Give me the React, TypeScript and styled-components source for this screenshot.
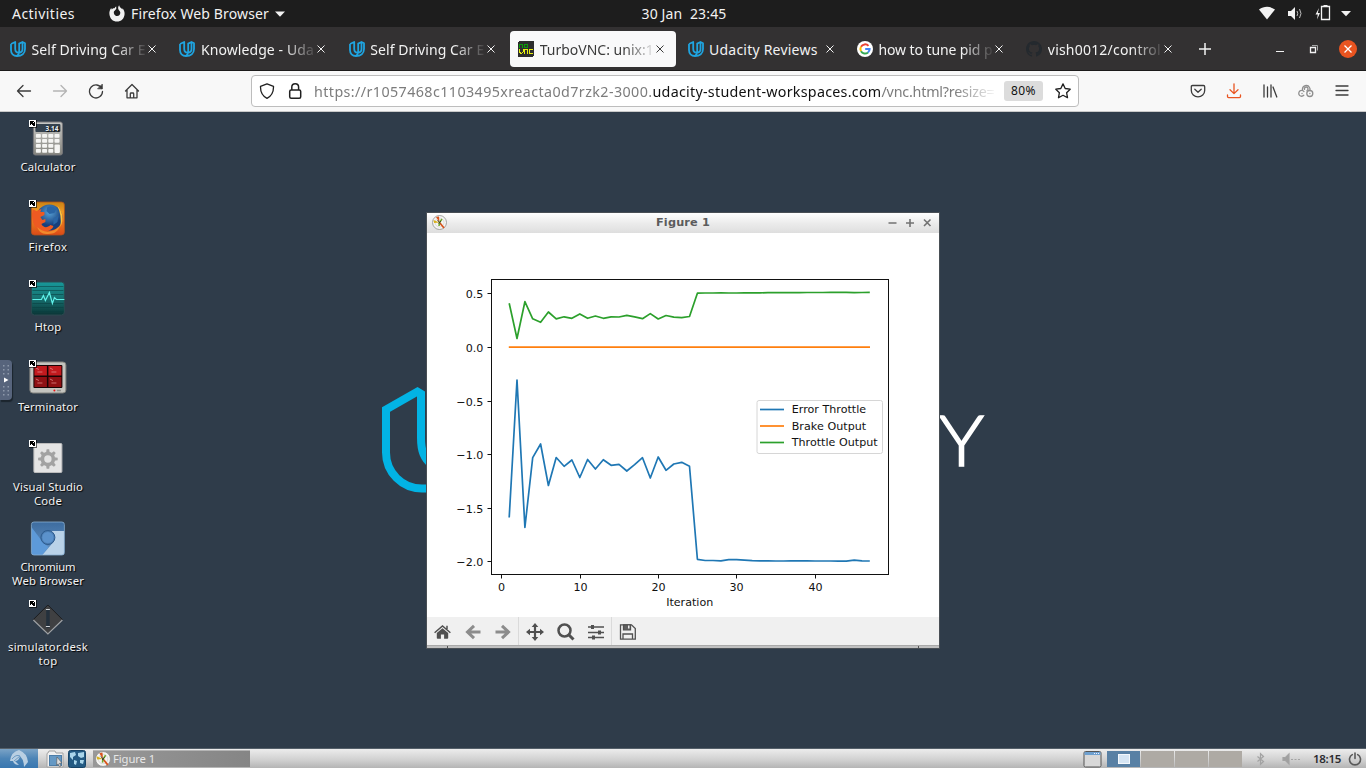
import React, { useLayoutEffect, useRef, useState } from "react";
import styled, { createGlobalStyle } from "styled-components";

const GlobalStyle = createGlobalStyle`
  * { box-sizing: border-box; }
  body { margin: 0; overflow: hidden; font-family: "Noto Sans", "Open Sans", sans-serif; }
  svg { display: block; flex: none; }
`;

/* ---------- text that is tracked to fill a given width ---------- */

const Line = styled.span`
  display: inline-block;
  white-space: pre;
`;

function FitText({ width, children }: { width: number; children: string }) {
  const ref = useRef<HTMLSpanElement>(null);
  const [spacing, setSpacing] = useState(0);
  useLayoutEffect(() => {
    const el = ref.current;
    if (el) setSpacing((width - el.getBoundingClientRect().width) / children.length);
  }, [width, children]);
  return (
    <Line ref={ref} style={{ letterSpacing: spacing }}>
      {children}
    </Line>
  );
}

/* ---------- layout ---------- */

const Screen = styled.div`
  width: 1366px;
  height: 768px;
  display: flex;
  flex-direction: column;
  overflow: hidden;
`;

const TopBar = styled.header`
  height: 27px;
  flex: none;
  background: #1d1d1d;
  color: #f2f2f2;
  font-size: 14px;
  line-height: 26px;
  display: grid;
  grid-template-columns: 1fr auto 1fr;
  align-items: center;
`;

const TopLeft = styled.div`
  display: flex;
  align-items: center;
  padding-left: 12px;
`;

const AppMenu = styled.div`
  display: flex;
  align-items: center;
  margin-left: 34px;
  gap: 6px;
`;

const TopDate = styled.div`
  padding-left: 2px;
`;

const TopRight = styled.div`
  display: flex;
  justify-content: flex-end;
  align-items: center;
  padding-right: 15px;
`;

const TabBar = styled.nav`
  height: 44px;
  flex: none;
  background: #333132;
  border-bottom: 1px solid #1c1b1b;
  padding: 4px 0 3px 2px;
  display: flex;
  align-items: center;
`;

const Tab = styled.div<{ $active?: boolean }>`
  width: 166px;
  height: 36px;
  margin-right: 3.4px;
  flex: none;
  border-radius: 4px;
  padding: 0 12px 0 8px;
  display: flex;
  align-items: center;
  font-size: 14px;
  line-height: 20px;
  color: ${(p) => (p.$active ? "#3b3b3b" : "#f2f2f2")};
  background: ${(p) => (p.$active ? "#f9f9fa" : "transparent")};
`;

const TabTitle = styled.div<{ $fade: boolean }>`
  flex: 1;
  height: 22px;
  padding-top: 2px;
  margin-left: 5.5px;
  ${(p) => p.$fade && "mask-image: linear-gradient(to right, #000 84px, transparent 117px);"}
`;

const TabControls = styled.div`
  display: flex;
  flex: 1;
  align-items: center;
  padding: 0 9px 0 11px;
`;

const WindowButtons = styled.div`
  margin-left: auto;
  display: flex;
  align-items: center;
`;

const NavBar = styled.div`
  height: 41px;
  flex: none;
  background: #f8f8f8;
  border-bottom: 1px solid #c9c9c9;
  display: flex;
  align-items: center;
  color: #3c3c3c;
`;

const NavButtons = styled.div`
  display: flex;
  width: 251px;
  padding-left: 16px;
  gap: 20px;
`;

const UrlBar = styled.div`
  width: 828px;
  height: 32px;
  border: 1px solid #bdbdbd;
  border-radius: 4px;
  background: #fff;
  display: flex;
  align-items: center;
  padding: 0 7px;
`;

const UrlText = styled.div`
  width: 682px;
  margin-left: 11px;
  padding-top: 1px;
  white-space: nowrap;
  font-size: 14.3px;
  line-height: 24px;
  color: #7c7c7c;
  mask-image: linear-gradient(to right, #000 640px, transparent 684px);
`;

const Host = styled.span`
  color: #101010;
`;

const Zoom = styled.div`
  width: 39px;
  height: 20px;
  margin: 0 12px 0 8px;
  border-radius: 3px;
  background: #dcdcdc;
  color: #101010;
  font-size: 12px;
  line-height: 20px;
  text-align: center;
`;

const NavActions = styled.div`
  margin-left: auto;
  display: flex;
  gap: 20px;
  padding-right: 16px;
`;

const Desktop = styled.main`
  position: relative;
  height: 636px;
  flex: none;
  background: #2f3c4a;
  overflow: hidden;
`;

const Wallpaper = styled.svg`
  position: absolute;
  left: 370px;
  top: 260px;
`;

const IconColumn = styled.div`
  width: 96px;
  padding-top: 6px;
  display: flex;
  flex-direction: column;
`;

const Launcher = styled.div`
  height: 80px;
  display: flex;
  flex-direction: column;
  align-items: center;
  color: #f2f2f2;
  font-size: 11.3px;
  line-height: 14px;
  text-shadow: 1px 1px 1px #000;
`;

const LauncherLabel = styled.div`
  margin-top: 2px;
  display: flex;
  flex-direction: column;
  align-items: center;
`;

const SideHandle = styled.div`
  position: absolute;
  left: 0;
  top: 248px;
  width: 12px;
  height: 40px;
  border-radius: 0 4px 4px 0;
  background: #57647c;
  box-shadow: 1px 2px 1px #1b242d;
`;

const FigureWindow = styled.section`
  position: absolute;
  left: 427px;
  top: 101px;
  width: 512px;
  height: 435px;
  display: flex;
  flex-direction: column;
  background: #fff;
  box-shadow: 0 0 0 1px #494f55;
`;

const TitleBar = styled.div`
  height: 20px;
  flex: none;
  background: linear-gradient(#ffffff, #ececec 50%, #dedede);
  display: grid;
  grid-template-columns: 1fr auto 1fr;
  align-items: center;
  padding: 0 5px 1px 5px;
  font: bold 11.3px/19px "DejaVu Sans", sans-serif;
  color: #5c5c5c;
`;

const TitleButtons = styled.div`
  display: flex;
  justify-content: flex-end;
`;

const PlotTools = styled.div`
  height: 29px;
  flex: none;
  background: #f0f0f0;
  display: flex;
  align-items: center;
`;

const ToolGroup = styled.div<{ $width: number }>`
  width: ${(p) => p.$width}px;
  height: 29px;
  border-right: 1px solid #dadada;
  display: flex;
  align-items: center;
  justify-content: space-around;
`;

const ResizeEdge = styled.div`
  height: 3px;
  margin-top: -1px;
  flex: none;
  background: #c0c0c0;
  border-top: 1px solid #a9a9a9;
  display: flex;
  justify-content: space-between;
  padding: 0 20px;
`;

const Notch = styled.span`
  width: 1px;
  height: 2px;
  background: #555;
`;

const Panel = styled.footer`
  height: 20px;
  flex: none;
  border-top: 1px solid #55606a;
  background: linear-gradient(#ececec, #cfcfcf 60%, #b4b4b4);
  display: flex;
  align-items: center;
  font-size: 11.3px;
`;

const StartButton = styled.div`
  width: 38px;
  height: 19px;
  background: linear-gradient(#7ba3c6, #4c84b6 50%, #3977b0);
  display: flex;
  justify-content: center;
`;

const Shortcuts = styled.div`
  display: flex;
  gap: 4px;
  padding: 0 7px 0 8px;
`;

const TaskButton = styled.div`
  width: 157px;
  height: 17px;
  background: linear-gradient(to right, #989898, #858585);
  border-top: 1px solid #b4b4b4;
  color: #e6e6e6;
  display: flex;
  align-items: center;
  padding-left: 2px;
  gap: 2px;
  line-height: 16px;
`;

const Tray = styled.div`
  margin-left: auto;
  display: flex;
  align-items: center;
  padding-right: 4px;
`;

const Pager = styled.div`
  display: grid;
  grid-template-columns: repeat(4, 33px);
  gap: 1px;
  height: 16px;
  margin: 0 13px 0 5px;
`;

const Workspace = styled.div<{ $current?: boolean }>`
  background: ${(p) => (p.$current ? "#5880a4" : "#aeaaa4")};
  display: flex;
  align-items: center;
  justify-content: center;
`;

const MiniWindow = styled.div`
  width: 12px;
  height: 10px;
  background: #d6e5f3;
  border: 1px solid #f4f8fc;
`;

const Clock = styled.div`
  color: #2c2c30;
  font-size: 11.5px;
  font-weight: 600;
  line-height: 16px;
  margin: 0 7px 0 12px;
`;

/* ---------- drawings ---------- */

const UdacityMark = () => (
  <svg width="16" height="16" viewBox="0 0 16 16" fill="none" stroke="#1fa4e0" strokeWidth="1.8" strokeLinejoin="round">
    <path d="M1 3L5.200 1V7.500c0 2.800 1.300 4.200 3.300 4.200M1 3V9c0 3.500 2.300 6 6 6 4.700 0 8-2.500 8-7V2.300L12.500 1 9.200 2.600V10c0 2.500-.8 4-2.500 5M12.500 1V8c0 2.200-1.300 3.600-3.500 3.700" />
  </svg>
);

const NoVncMark = () => (
  <svg width="16" height="16" shapeRendering="crispEdges">
    <rect width="16" height="16" rx="2" fill="#2d2d2d" />
    <path d="M1 3h4v4H4V4H2v3H1zM6 3h4v4H6zM7 4v2h2V4z" fill="#0a9a0a" fillRule="evenodd" />
    <path d="M1 8h1v3h1v1h1v-1h1V8h1v3H5v1H4v1H2v-1H1zM6 8h4v5H9V9H7v4H6zM11 8h4v1h-3v3h3v1h-4z" fill="#e6ee10" />
  </svg>
);

const GoogleMark = () => (
  <svg width="16" height="16" viewBox="0 0 16 16" fill="none" strokeWidth="2">
    <circle cx="8" cy="8" r="8" fill="#fff" />
    <path d="M11.500 4.900A4.600 4.600 0 0 0 4 5.800" stroke="#ea4335" />
    <path d="M4 5.800a4.600 4.600 0 0 0 0 4.400" stroke="#fbbc05" />
    <path d="M4 10.200a4.600 4.600 0 0 0 7 1.200" stroke="#34a853" />
    <path d="M11 11.400A4.600 4.600 0 0 0 12.600 8.100H8.200" stroke="#4285f4" />
  </svg>
);

const GithubMark = () => (
  <svg width="16" height="16" viewBox="0 0 16 16" fill="#24292e">
    <path d="M8 0C3.580 0 0 3.580 0 8c0 3.540 2.290 6.530 5.470 7.590.4.070.55-.17.55-.38v-1.490c-2.230.48-2.690-.94-2.690-.94-.36-.93-.89-1.170-.89-1.170-.73-.5.050-.49.050-.49.81.060 1.230.83 1.230.83.72 1.230 1.880.87 2.340.66.070-.52.28-.87.51-1.070-1.780-.2-3.640-.89-3.640-3.950 0-.87.31-1.590.82-2.150-.08-.2-.36-1.020.08-2.120 0 0 .67-.21 2.200.82a7.600 7.600 0 0 1 4 0c1.530-1.040 2.200-.82 2.200-.82.44 1.100.16 1.920.08 2.120.51.56.82 1.270.82 2.150 0 3.070-1.870 3.750-3.650 3.950.29.25.54.73.54 1.480v2.190c0 .21.150.46.55.38A8 8 0 0 0 8 0z" />
  </svg>
);

const CloseCross = ({ size = 8 }: { size?: number }) => (
  <svg width={size} height={size} viewBox="0 0 8 8" stroke="currentColor" strokeWidth="1">
    <path d="M.5.5l7 7M7.500.5l-7 7" />
  </svg>
);

const FirefoxSymbol = () => (
  <svg width="16" height="17" viewBox="0 0 16 17">
    <path
      fill="#f2f2f2"
      fillRule="evenodd"
      d="M.4 9C.2 6.500 1 4.500 2.200 3l.6 1.400C3.600 3.200 4.500 3 5.600 3.200 6 2.300 6.600 1.900 7.200 1.600L7.300 3.800 5.900 5.500C5.100 6 4.600 7 4.900 8.200 5.300 10.100 6.600 11 8.200 11c1.900 0 3.300-1.500 3.100-3.400C11.100 6 9.700 5.300 9.300 4 8.900 2.600 9.300 1 10.200.2c.2 1.800 1.800 2.500 3.200 4.200V3.200C15 5 15.700 6.800 15.600 9c-.2 4.500-3.500 7.600-7.600 7.600S.7 13.500.4 9z"
    />
  </svg>
);

const Caret = () => (
  <svg width="10" height="6" fill="#f2f2f2">
    <path d="M0 .5h10L5 5.800z" />
  </svg>
);

const StatusIcons = () => (
  <svg width="92" height="18" viewBox="1259 5 92 18" fill="#f2f2f2">
    <path d="M1259 9.500c5-3.600 11-3.600 16 0l-8 10z" />
    <path d="M1288 11h3l4-4v13l-4-4h-3z" />
    <path d="M1297 11q1.500 2.500 0 5M1299.500 9q3 4.500 0 9" fill="none" stroke="#bdbdbd" />
    <path d="M1319 8l-3.500 6.500h2.300l-.8 5 3-6.500h-2.200z" />
    <path d="M1321.500 8.500v11h8v-13h-8z" fill="none" stroke="#f2f2f2" strokeWidth="1.300" />
    <path d="M1323.500 5h4v2h-4zM1341 11h10l-5 5.200z" />
  </svg>
);

const NavIcon = ({ color = "#3c3c3c", children }: { color?: string; children: React.ReactNode }) => (
  <svg width="16" height="16" viewBox="0 0 16 16" fill="none" stroke={color} strokeWidth="1.300" strokeLinecap="round" strokeLinejoin="round">
    {children}
  </svg>
);

const ShortcutBadge = () => (
  <g shapeRendering="crispEdges">
    <rect x="1" y="2" width="8" height="8" fill="#000" opacity=".6" />
    <rect x="1" y="2" width="7" height="7" fill="#fff" />
    <path d="M2 3h4v1h1v4H5V7H4V6H3V7H2z" fill="#000" />
    <path d="M5 4h1v1H5z" fill="#fff" />
  </g>
);

function Art({ badge = true, children }: { badge?: boolean; children: React.ReactNode }) {
  return (
    <svg width="40" height="40" viewBox="0 0 40 40">
      <g transform="translate(-.6 0)">{children}</g>
      {badge && <ShortcutBadge />}
    </svg>
  );
}

const CalculatorArt = () => (
  <Art>
    <defs>
      <linearGradient id="calc" x2="0" y2="1">
        <stop stopColor="#c9c9c6" />
        <stop offset="1" stopColor="#85857f" />
      </linearGradient>
    </defs>
    <rect x="6" y="4" width="29" height="33" rx="2" fill="url(#calc)" stroke="#77777a" />
    <rect x="8" y="6" width="25" height="8" rx="1" fill="#34414d" />
    <text x="31" y="12.600" fontSize="6.500" fontWeight="700" fill="#e8f0f4" textAnchor="end">3.14</text>
    {[16, 21, 26, 31].map((y, r) =>
      [8.500, 14.700, 20.900, 27.100].map((x, c) =>
        c === 3 && r > 1 ? null : <rect key={`${x}-${y}`} x={x} y={y} width="5" height="3.700" rx=".8" fill="#f5f5f3" />
      )
    )}
    <rect x="27.100" y="26.500" width="5.400" height="8.500" rx="1" fill="#f5f5f3" />
  </Art>
);

const FirefoxArt = () => (
  <Art>
    <defs>
      <linearGradient id="fx" x2="0" y2="1">
        <stop stopColor="#c98213" />
        <stop offset=".3" stopColor="#f09a24" />
        <stop offset="1" stopColor="#dc4a17" />
      </linearGradient>
      <radialGradient id="globe" cx=".5" cy=".3">
        <stop stopColor="#58a3d8" />
        <stop offset="1" stopColor="#173f7c" />
      </radialGradient>
    </defs>
    <rect x="4" y="4" width="33" height="33" rx="3" fill="url(#fx)" stroke="#b4521a" strokeWidth=".8" />
    <circle cx="22" cy="19.500" r="13" fill="url(#globe)" />
    <path d="M20 9q5-2 9 2l-2 4-5 1-3-3zM26 20l5-2-1 6-4 3z" fill="#2a65a5" />
    <path d="M5 11l4 2 5-2-1 3h4l0 3-4 2 2 3 3-1 0 3-4 2c2 4 6 4 9 1l3 1c-1 4-6 6-11 5-7-1-12-9-10-21z" fill="#ee5a22" />
    <path d="M10 29c4 5 15 8 23-2-3 9-9 9-14 9S11 33 10 29z" fill="#f28a2c" />
    <path d="M30 8c5 5 7 13 3 21 1-8 0-15-3-21z" fill="#ffc13b" />
  </Art>
);

const HtopArt = () => (
  <Art>
    <defs>
      <linearGradient id="htop" x2="0" y2="1">
        <stop stopColor="#17999a" />
        <stop offset=".5" stopColor="#17706f" />
        <stop offset="1" stopColor="#0a3536" />
      </linearGradient>
    </defs>
    <rect x="4" y="4" width="33" height="33" rx="3" fill="url(#htop)" stroke="#2c4a50" />
    <path d="M5 8.500h31M5 12.500h31M5 16.500h31M5 25.500h31M5 29.500h31M5 33.500h31" stroke="#093e40" opacity=".55" />
    <path d="M5 21.500h9l2-4 2 5 4-8 3 11 2-6 2 2h8" fill="none" stroke="#5ff0e8" strokeWidth="1.200" />
  </Art>
);

const TerminatorArt = () => (
  <Art>
    <rect x="2.500" y="4" width="36" height="31" rx="3" fill="#c4c4bf" stroke="#83837e" />
    <rect x="6" y="7" width="29" height="23" rx="1" fill="#190405" />
    <path d="M7 8h12.500v9.500H7zM21 8h13v9.500H21z" fill="#c21a1e" />
    <path d="M7 19h12.500v10H7zM21 19h13v10H21z" fill="#8f1013" />
    <path d="M8.500 10l3 1.500M10 14h5M22.500 10l3 1.500M24 14h5M8.500 21l3 1.500M10 25h5M22.500 21l3 1.500M24 25h5" stroke="#e08585" strokeWidth=".8" />
    <circle cx="27" cy="32.500" r="1" fill="#e11" />
    <path d="M29.500 32.500h4" stroke="#8d8d88" strokeWidth="1.500" />
  </Art>
);

const GearArt = () => (
  <Art>
    <rect x="6.500" y="5.500" width="28" height="29" rx="1" fill="#e4e4e4" stroke="#bcbcbc" />
    <g transform="translate(20.500 21)">
      <circle r="5.500" fill="none" stroke="#a2a2a2" strokeWidth="3.600" />
      {[0, 45, 90, 135, 180, 225, 270, 315].map((a) => (
        <path key={a} d="M-1.800-6.500l.5-3.300h2.600l.5 3.300z" fill="#a2a2a2" transform={`rotate(${a})`} />
      ))}
    </g>
  </Art>
);

const ChromiumArt = () => (
  <Art badge={false}>
    <defs>
      <linearGradient id="cr" x2="0" y2="1">
        <stop stopColor="#3d6c9f" />
        <stop offset="1" stopColor="#6695c7" />
      </linearGradient>
      <clipPath id="crc">
        <rect x="4" y="4" width="33" height="33" rx="2.500" />
      </clipPath>
    </defs>
    <g clipPath="url(#crc)">
      <rect x="4" y="4" width="33" height="33" fill="url(#cr)" />
      <path d="M4 9l12 16 5 4-7 9H4z" fill="#5d9ad9" />
      <path d="M20 13h17v24H15l11-13z" fill="#b9d2e8" />
      <circle cx="20.500" cy="19.500" r="7" fill="#4b7db2" stroke="#2c5b8f" />
      <circle cx="20.500" cy="19.500" r="5.600" fill="#5b92cc" />
    </g>
    <rect x="4" y="4" width="33" height="33" rx="2.500" fill="none" stroke="#88aed2" strokeWidth=".8" />
  </Art>
);

const SimulatorArt = () => (
  <Art>
    <path d="M20.500 7L35 21.500 20.500 36 6 21.500z" fill="#3f4042" stroke="#1c1d1f" strokeLinejoin="round" />
    <path d="M6 22l14.500 14L35 22" fill="none" stroke="#a0a3a6" strokeWidth="1.200" />
    <rect x="18.800" y="11" width="3.500" height="19" rx="1.500" fill="#24303c" />
    <path d="M18.500 11.500h4M18.500 28.500h4" stroke="#d0d4d8" />
  </Art>
);

const MplLogo = ({ size = 15 }: { size?: number }) => (
  <svg width={size} height={size} viewBox="0 0 15 15">
    <circle cx="7.500" cy="7.500" r="7" fill="#f5f5f3" stroke="#8f8f8f" strokeWidth=".8" />
    <circle cx="7.500" cy="7.500" r="4.500" fill="none" stroke="#c2c2c2" strokeWidth=".5" />
    <path d="M7.500 7.500L4 2l3-.5z" fill="#d9541c" />
    <path d="M7.500 7.500L1.500 5l.5 3z" fill="#d9b11c" />
    <path d="M7.500 7.500l4.500 5.500" stroke="#d9541c" strokeWidth="1.700" />
    <path d="M7.500 7.500L10 4M7.500 7.500L7 11" stroke="#6fa52c" strokeWidth="1.500" />
    <path d="M5.500 5l2.500 3.500M9 6L6.500 8.500" stroke="#333" strokeWidth=".8" />
  </svg>
);

/* ---------- plot ---------- */

const throttleError = [
  517.500, 380, 527.500, 457.700, 444, 485.500, 457.500, 466.300, 460, 477.500, 459.500, 469, 459.700, 465.300, 464.300, 471, 464.700, 457.700, 478, 457,
  470.300, 464, 462.300, 466.300, 559.300, 560.500, 560.500, 560.800, 559.700, 559.700, 560.200, 560.700, 560.800, 560.900, 561, 561, 560.900, 560.900,
  560.800, 561, 561, 561, 561.200, 561.100, 560.100, 560.900, 561,
];
const throttleOutput = [
  303.300, 338.500, 301.700, 318.800, 322.300, 312, 318.900, 316.800, 318.300, 313.900, 318.300, 316, 318.300, 316.900, 317, 315.300, 316.900, 318.700,
  313.600, 319, 315.500, 317.200, 317.600, 316.500, 293.200, 293, 293, 292.900, 293, 293, 292.900, 292.800, 292.800, 292.700, 292.700, 292.600, 292.600,
  292.600, 292.500, 292.500, 292.500, 292.400, 292.400, 292.400, 292.600, 292.500, 292.300,
];
const toPoints = (ys: number[]) => ys.map((y, i) => `${(509.200 + i * 7.840).toFixed(1)},${y}`).join(" ");

const yTicks: [string, number][] = [["0.5", 293.500], ["0.0", 347.500], ["−0.5", 401.500], ["−1.0", 454.500], ["−1.5", 508.500], ["−2.0", 561.500]];
const xTicks: [string, number][] = [["0", 501.500], ["10", 580.500], ["20", 658.500], ["30", 736.500], ["40", 815.500]];
const legend: [string, string, number, number][] = [
  ["Error Throttle", "#1f77b4", 409.500, 74.500],
  ["Brake Output", "#ff7f0e", 426, 74.500],
  ["Throttle Output", "#2ca02c", 442.500, 86],
];

const PlotCanvas = styled.svg`
  font: 11.1px "DejaVu Sans", sans-serif;
`;

const Plot = () => (
  <PlotCanvas width="512" height="384" viewBox="427 233 512 384" fill="none">
    <g strokeWidth="1.700" strokeLinejoin="round">
      <polyline points={toPoints(throttleError)} stroke="#1f77b4" />
      <path d="M508.800 347.200H870" stroke="#ff7f0e" />
      <polyline points={toPoints(throttleOutput)} stroke="#2ca02c" />
    </g>
    <rect x="491.500" y="279.500" width="397" height="295" stroke="#111" />
    {yTicks.map(([label, y]) => (
      <g key={label}>
        <path d={`M487.500 ${y}h4`} stroke="#111" />
        <text x="483.300" y={y + 4} textAnchor="end" fill="#111">{label}</text>
      </g>
    ))}
    {xTicks.map(([label, x]) => (
      <g key={label}>
        <path d={`M${x} 574.500v4`} stroke="#111" />
        <text x={x} y="591" textAnchor="middle" fill="#111">{label}</text>
      </g>
    ))}
    <text x="689.700" y="606" textAnchor="middle" fill="#111">Iteration</text>
    <rect x="757" y="400.500" width="125.500" height="53" rx="2" fill="#fff" stroke="#d6d6d6" />
    {legend.map(([label, color, y, width]) => (
      <g key={label}>
        <path d={`M760 ${y}h24`} stroke={color} strokeWidth="1.700" />
        <text x="791.700" y={y + 3.500} fill="#111" textLength={width}>{label}</text>
      </g>
    ))}
  </PlotCanvas>
);

/* ---------- page ---------- */

const tabs = [
  { icon: <UdacityMark />, title: "Self Driving Car E", width: 114 },
  { icon: <UdacityMark />, title: "Knowledge - Uda", width: 113 },
  { icon: <UdacityMark />, title: "Self Driving Car E", width: 114 },
  { icon: <NoVncMark />, title: "TurboVNC: unix:1", width: 114, active: true },
  { icon: <UdacityMark />, title: "Udacity Reviews", width: 108.500, whole: true },
  { icon: <GoogleMark />, title: "how to tune pid p", width: 114 },
  { icon: <GithubMark />, title: "vish0012/control", width: 113 },
];

const launchers: { art: React.ReactNode; lines: [string, number][] }[] = [
  { art: <CalculatorArt />, lines: [["Calculator", 55]] },
  { art: <FirefoxArt />, lines: [["Firefox", 39]] },
  { art: <HtopArt />, lines: [["Htop", 27]] },
  { art: <TerminatorArt />, lines: [["Terminator", 60]] },
  { art: <GearArt />, lines: [["Visual Studio", 70], ["Code", 28]] },
  { art: <ChromiumArt />, lines: [["Chromium", 55], ["Web Browser", 72]] },
  { art: <SimulatorArt />, lines: [["simulator.desk", 80], ["top", 19]] },
];

export default function App() {
  return (
    <Screen>
      <GlobalStyle />
      <TopBar>
        <TopLeft>
          <FitText width={63}>Activities</FitText>
          <AppMenu>
            <FirefoxSymbol />
            <FitText width={138}>Firefox Web Browser</FitText>
            <Caret />
          </AppMenu>
        </TopLeft>
        <TopDate>
          <FitText width={85}>30 Jan  23:45</FitText>
        </TopDate>
        <TopRight>
          <StatusIcons />
        </TopRight>
      </TopBar>

      <TabBar>
        {tabs.map((t, i) => (
          <Tab key={i} $active={t.active}>
            {t.icon}
            <TabTitle $fade={!t.whole}>
              <FitText width={t.width}>{t.title}</FitText>
            </TabTitle>
            <CloseCross />
          </Tab>
        ))}
        <TabControls>
          <svg width="12" height="12" stroke="#f2f2f2" strokeWidth="1.500">
            <path d="M6 0v12M0 6h12" />
          </svg>
          <WindowButtons>
            <svg width="63" height="18" viewBox="1276 40 63 18" fill="none" stroke="#f2f2f2">
              <path d="M1276 51.500h8" />
              <path d="M1310.500 47.500h5v5h-5z" strokeWidth="1.300" />
              <path d="M1312 45.500h5.500v5" stroke="#a5a5a5" />
            </svg>
            <svg width="18" height="18" stroke="#fff" strokeWidth="1.300">
              <circle cx="9" cy="9" r="9" fill="#e95420" stroke="none" />
              <path d="M5.500 5.500l7 7M12.500 5.500l-7 7" />
            </svg>
          </WindowButtons>
        </TabControls>
      </TabBar>

      <NavBar>
        <NavButtons>
          <NavIcon><path d="M14.500 8H1.500M7 2.500L1.500 8 7 13.500" /></NavIcon>
          <NavIcon color="#b4b4b4"><path d="M1.500 8h13M9 2.500L14.500 8 9 13.500" /></NavIcon>
          <NavIcon>
            <path d="M13.800 5.500A6.500 6.500 0 1 0 14.500 8.500" />
            <path d="M14.300 1.500v4.300H10z" fill="#3c3c3c" strokeWidth=".8" />
          </NavIcon>
          <NavIcon>
            <path d="M1.500 8L8 1.500 14.500 8M3 7v7.800h10V7M6.300 14.500v-3.700q0-.8.800-.8h1.800q.8 0 .8.800v3.700" />
          </NavIcon>
        </NavButtons>
        <UrlBar>
          <NavIcon color="#202020"><path d="M8 .8l6.500 2.500C14.700 9.500 12.500 13 8 15.300 3.500 13 1.300 9.500 1.500 3.300z" /></NavIcon>
          <svg width="28" height="18" viewBox="0 0 28 18" fill="none" stroke="#202020" strokeWidth="1.500">
            <rect x="14.700" y="8" width="11" height="8.200" rx="1.500" />
            <path d="M16.800 8V5q0-3.300 3.400-3.300T23.600 5v3" />
          </svg>
          <UrlText>
            <FitText width={338.500}>https://r1057468c1103495xreacta0d7rzk2-3000.</FitText>
            <Host>
              <FitText width={229}>udacity-student-workspaces.com</FitText>
            </Host>
            <FitText width={113}>/vnc.html?resize=</FitText>
          </UrlText>
          <Zoom>
            <FitText width={25}>80%</FitText>
          </Zoom>
          <NavIcon color="#202020"><path d="M8 .9l2.200 4.600 5 .7-3.600 3.500.9 5L8 12.300l-4.500 2.400.9-5L.8 6.200l5-.7z" /></NavIcon>
        </UrlBar>
        <NavActions>
          <NavIcon>
            <path d="M2.500 2.500h11q1.200 0 1.200 1.200v3.800a6.700 6.300 0 0 1-13.400 0V3.700q0-1.200 1.200-1.200zM4.800 6.300L8 9.300l3.200-3" />
          </NavIcon>
          <NavIcon color="#e95420"><path d="M8 .8v9.500M4 6.800l4 3.800 4-3.800M1.500 12v1.600q0 1.100 1.100 1.100h10.800q1.100 0 1.100-1.100V12" /></NavIcon>
          <NavIcon><path d="M2 2v12M5.500 4v10M9 2v12M11 4l3.800 10" /></NavIcon>
          <NavIcon color="#8e8e8e">
            <path d="M4.500 6.500A3.700 3.700 0 0 1 11.500 4.500q1 1.500.3 3M6.500 6.300a1.800 1.800 0 1 1 2.500 1.200" />
            <path d="M5.800 12.300A2.900 2.900 0 1 1 6 8.600M4 10.500h.1" />
            <circle cx="11.800" cy="10.500" r="3" />
            <path d="M11.800 10.500h.1" />
          </NavIcon>
          <NavIcon><path d="M2 3h12M2 7.500h12M2 12h12" /></NavIcon>
        </NavActions>
      </NavBar>

      <Desktop>
        <Wallpaper width="630" height="140" viewBox="370 372 630 140" fill="none">
          <path
            d="M432 488.500H422A36 36 0 0 1 386 452.500V409.500L417.500 391.600 421 393.700V438C421 451 424 458.500 432 465"
            stroke="#02b3e4"
            strokeWidth="8"
          />
          <text
            x="939"
            y="466"
            fontFamily="Lato"
            fontWeight="300"
            fontSize="71"
            fill="#fff"
            stroke="#fff"
            strokeWidth="1.500"
            textLength="45"
            lengthAdjust="spacingAndGlyphs"
          >
            Y
          </text>
        </Wallpaper>
        <IconColumn>
          {launchers.map((l, i) => (
            <Launcher key={i}>
              {l.art}
              <LauncherLabel>
                {l.lines.map(([text, width]) => (
                  <FitText key={text} width={width}>{text}</FitText>
                ))}
              </LauncherLabel>
            </Launcher>
          ))}
        </IconColumn>
        <SideHandle>
          <svg width="12" height="40" fill="#8d98aa">
            {[5, 9, 13, 26, 30, 34].map((y) => (
              <path key={y} d={`M3 ${y}h1.500v1.500H3zM7.500 ${y}h1.500v1.500H7.500z`} />
            ))}
            <path d="M4 17.500l4.500 2.500L4 22.500z" fill="#fff" />
          </svg>
        </SideHandle>

        <FigureWindow>
          <TitleBar>
            <MplLogo />
            <FitText width={54}>Figure 1</FitText>
            <TitleButtons>
              <svg width="47" height="12" fill="none" stroke="#737373" strokeWidth="1.600">
                <path d="M1.500 6h8M19 6h8M23 2v8M37 2.500l6.500 6.500M43.500 2.500L37 9" />
              </svg>
            </TitleButtons>
          </TitleBar>
          <Plot />
          <PlotTools>
            <ToolGroup $width={92}>
              <svg width="17" height="15" viewBox="0 0 17 15" fill="#505050">
                <path d="M8.500 4.200L2.800 9v5q0 .8.800.8h3.300V10.500h3.200v4.300h3.300q.8 0 .8-.8V9z" />
                <path d="M.6 8.700L8.500 2l7.900 6.700M13 1.700V5" fill="none" stroke="#505050" strokeWidth="1.500" />
              </svg>
              <svg width="16" height="16" fill="none" stroke="#8c8c8c" strokeWidth="3"><path d="M15.500 8H3M9 1.800L2.500 8 9 14.200" /></svg>
              <svg width="16" height="16" fill="none" stroke="#8c8c8c" strokeWidth="3"><path d="M.5 8H13M7 1.800L13.500 8 7 14.200" /></svg>
            </ToolGroup>
            <ToolGroup $width={93}>
              <svg width="18" height="18" fill="#505050">
                <path d="M9 0l3.300 4h-2.200v3.900H14V5.700L18 9l-4 3.300v-2.200h-3.900V14h2.200L9 18l-3.300-4h2.200v-3.900H4v2.200L0 9l4-3.300v2.200h3.900V4H5.700z" />
              </svg>
              <svg width="18" height="18" fill="none" stroke="#505050"><circle cx="7.500" cy="7.500" r="6" strokeWidth="2.500" /><path d="M11.500 11.500l5 5" strokeWidth="3" /></svg>
              <svg width="16" height="16" stroke="#505050" strokeWidth="1.300">
                <path d="M0 3h16M0 8.500h16M0 13.500h16" />
                <path d="M4.500 1v4M11.500 6.500v4M5.500 11.500v4" strokeWidth="3" />
              </svg>
            </ToolGroup>
            <svg width="31" height="16" fill="none" stroke="#505050" strokeWidth="1.300">
              <path d="M8.500.8h11l3.800 3.800v10.600H8.500zM11 15v-5h9.500v5" />
              <path d="M11.500.8h7v5h-7z" fill="#606060" />
              <path d="M16 1.500h1.500v3H16z" fill="#eee" stroke="none" />
            </svg>
          </PlotTools>
          <ResizeEdge>
            <Notch />
            <Notch />
          </ResizeEdge>
        </FigureWindow>
      </Desktop>

      <Panel>
        <StartButton>
          <svg width="20" height="19" fill="#b9cfe2">
            <path d="M1 12q1-9 9-11 8 3 9 12l-4 5q0-7-4-11-1 5-5 5l4 4q-5 0-6-4z" />
            <path d="M3 10q4-5 8-3M5 12l6-5" stroke="#6f9cc4" fill="none" />
          </svg>
        </StartButton>
        <Shortcuts>
          <svg width="18" height="18">
            <path d="M1 4q0-1 1-1l1-2h6l1 2h7v14H1z" fill="#f1f1f1" stroke="#a2a2a2" />
            <rect x="3.500" y="5.500" width="12" height="10" fill="#6699c4" stroke="#4c7da8" />
            <path d="M11 7l5 6-2.500.3L15 16l-1.500.8-1.500-3-1.500 1.500z" fill="#ddd" stroke="#555" strokeWidth=".6" />
          </svg>
          <svg width="18" height="18">
            <rect x=".5" y=".5" width="17" height="17" rx="2" fill="#235a83" stroke="#174467" />
            <path d="M2 3l5-1 1 3-3 2v3l-3-3zM6 10l3 1-1 4-2-1zM10 3l6-1v5l-3 1-3-2zM12 10l4 0-1 4-3-1z" fill="#a9d5ea" />
          </svg>
        </Shortcuts>
        <TaskButton>
          <MplLogo size={16} />
          <FitText width={42}>Figure 1</FitText>
        </TaskButton>
        <Tray>
          <svg width="19" height="18">
            <rect x="1" y="1.500" width="17" height="15.500" rx="1.500" fill="#d8d8d8" stroke="#555" />
            <path d="M1.500 2h16v3h-16z" fill="#6ea0cf" />
            <path d="M11 3.500h5" stroke="#eef" strokeDasharray="1 1" />
          </svg>
          <Pager>
            <Workspace $current><MiniWindow /></Workspace>
            <Workspace />
            <Workspace />
            <Workspace />
          </Pager>
          <svg width="46" height="14" fill="none" stroke="#a3a3a3" strokeWidth="1.200">
            <path d="M2.500 4.500l6 5-3 2.800V1.700l3 2.800-6 5" />
            <path d="M28 5.500h2.500L34 2v10l-3.500-3.500H28z" fill="#a0a0a0" />
            <path d="M36 7.500h10" strokeDasharray="2 1.500" />
          </svg>
          <Clock>
            <FitText width={28}>18:15</FitText>
          </Clock>
          <svg width="14" height="14" fill="none" stroke="#595959" strokeWidth="1.600" strokeLinecap="round">
            <path d="M4.300 2.600a5.500 5.500 0 1 0 5.400 0M7 1v5.500" />
          </svg>
        </Tray>
      </Panel>
    </Screen>
  );
}
